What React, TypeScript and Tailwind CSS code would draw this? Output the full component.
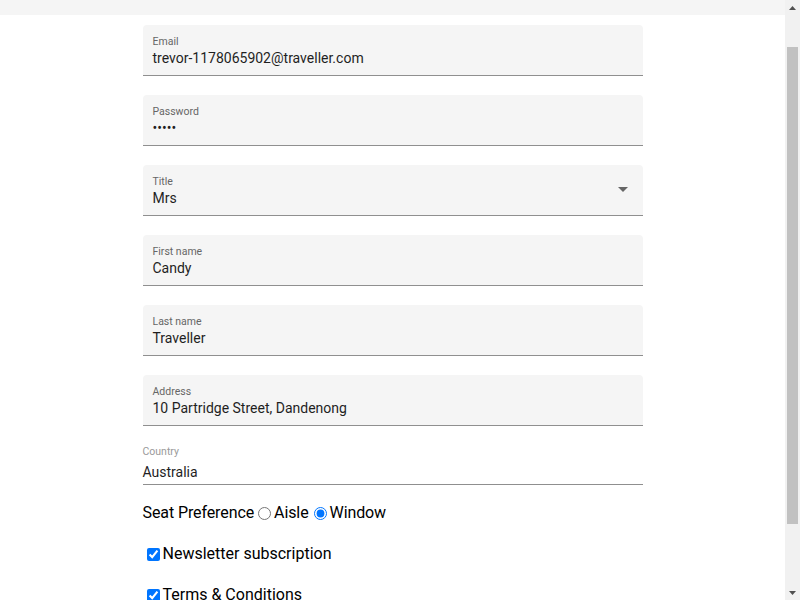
import { useLayoutEffect, useRef } from 'react'

interface FieldProps {
  label: string
  value: string
  select?: boolean
}

function FilledField({ label, value, select = false }: FieldProps) {
  return (
    <div className="mb-[19px] flex h-[51px] items-center rounded-t-[4px] border-b border-[#8f8f8f] bg-[#f5f5f5] pl-[10px] pr-[15px]">
      <div className="flex h-full flex-1 flex-col pt-[11px]">
        <span className="text-[10.5px] leading-[12px] text-[#666]">{label}</span>
        <span className="text-[14px] leading-[20px] text-[#1f1f1f]">{value}</span>
      </div>
      {select && (
        <svg width="10" height="5" viewBox="0 0 10 5" className="mb-[1px]">
          <path d="M0 0h10L5 5z" fill="#666" />
        </svg>
      )}
    </div>
  )
}

function Scrollbar() {
  return (
    <div className="flex w-[15px] shrink-0 flex-col bg-[#f1f1f1]">
      <div className="flex h-[15px] items-center justify-center">
        <svg width="7" height="4" viewBox="0 0 7 4">
          <path d="M0 4L3.5 0L7 4z" fill="#505050" />
        </svg>
      </div>
      <div className="flex-1 px-[2px] pt-[32px]">
        <div className="h-[477px] bg-[#c1c1c1]" />
      </div>
      <div className="flex h-[15px] items-center justify-center">
        <svg width="7" height="4" viewBox="0 0 7 4">
          <path d="M0 0L3.5 4L7 0z" fill="#505050" />
        </svg>
      </div>
    </div>
  )
}

export default function App() {
  const scroller = useRef<HTMLDivElement>(null)

  useLayoutEffect(() => {
    if (scroller.current) scroller.current.scrollTop = 40
  }, [])

  return (
    <div className="flex h-screen bg-white font-['Roboto',sans-serif] text-black">
      <div ref={scroller} className="flex-1 overflow-y-auto [scrollbar-width:none]">
        <div className="pb-[71px]">
          <div className="h-[55px] bg-[#f5f5f5]" />
          <form className="mx-auto mt-[10px] w-[500px]">
            <FilledField label="Email" value="trevor-1178065902@traveller.com" />
            <FilledField label="Password" value="•••••" />
            <FilledField label="Title" value="Mrs" select />
            <FilledField label="First name" value="Candy" />
            <FilledField label="Last name" value="Traveller" />
            <FilledField label="Address" value="10 Partridge Street, Dandenong" />

            <div className="flex flex-col border-b border-[#8f8f8f] pb-[2px] pt-[1px]">
              <span className="text-[10.5px] leading-[12px] text-[#9a9a9a]">Country</span>
              <span className="mt-[4px] text-[14px] leading-[20px] text-[#1f1f1f]">Australia</span>
            </div>

            <div className="mt-[16px] flex items-center text-[16px] leading-[24px] tracking-[-0.1px]">
              <span>Seat Preference</span>
              <input type="radio" name="seat" className="ml-[4px] mr-[3px] h-[13px] w-[13px]" />
              <span>Aisle</span>
              <input type="radio" name="seat" defaultChecked className="ml-[5px] mr-[3px] h-[13px] w-[13px]" />
              <span>Window</span>
            </div>

            <div className="mt-[17px] flex items-center text-[16px] leading-[24px]">
              <input type="checkbox" defaultChecked className="ml-[4px] mr-[3px] h-[13px] w-[13px]" />
              <span>Newsletter subscription</span>
            </div>

            <div className="mt-[17px] flex items-center text-[16px] leading-[24px]">
              <input type="checkbox" defaultChecked className="ml-[4px] mr-[3px] h-[13px] w-[13px]" />
              <span>Terms &amp; Conditions</span>
            </div>
          </form>
        </div>
      </div>
      <Scrollbar />
    </div>
  )
}
